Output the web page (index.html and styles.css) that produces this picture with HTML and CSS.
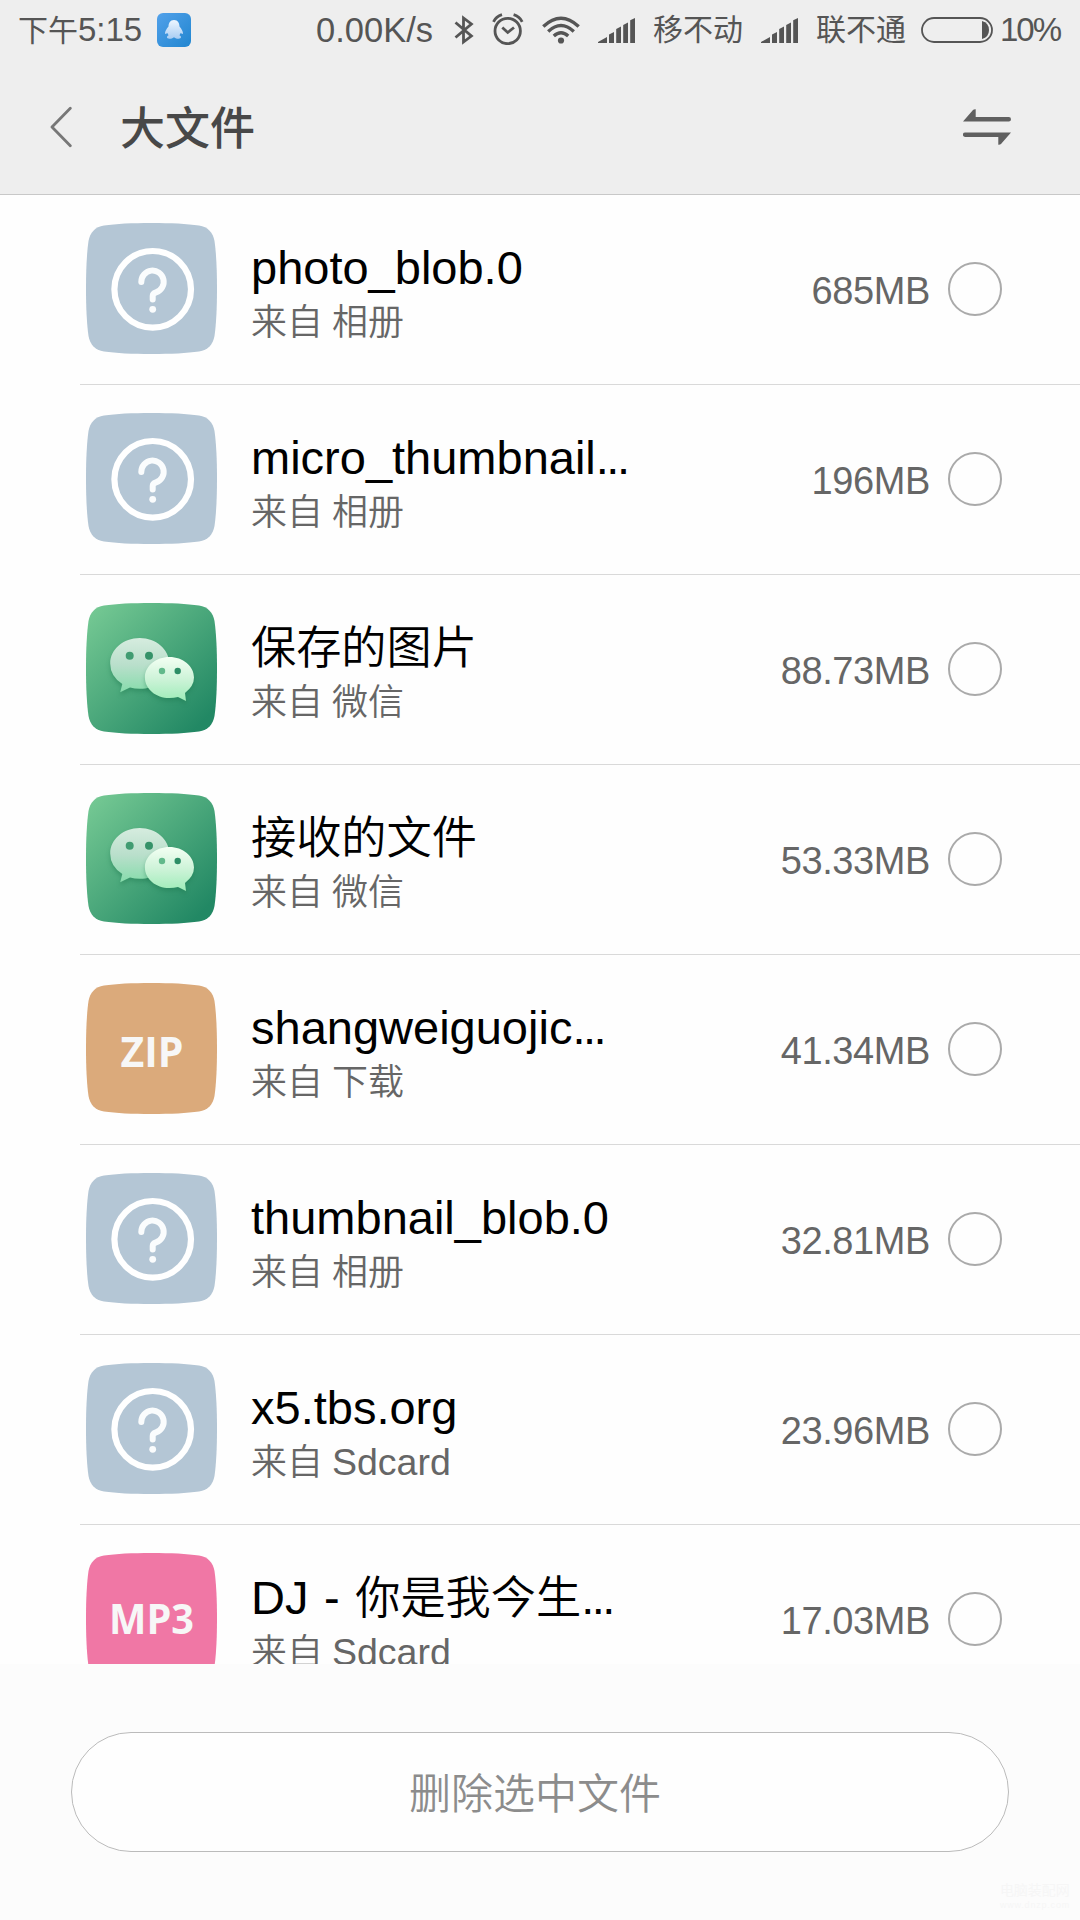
FILE: index.html
```html
<!DOCTYPE html>
<html lang="zh-CN">
<head>
    <meta charset="UTF-8">
    <meta name="viewport" content="width=device-width, initial-scale=1.0">
    <title>大文件</title>
    <link rel="stylesheet" href="styles.css">
</head>
<body>
    <!-- Shared icons -->
    <svg class="defs" width="0" height="0">
        <defs>
            <linearGradient id="green" x1="0" y1="0" x2="1" y2="1">
                <stop offset="0.05" stop-color="#74c893"/>
                <stop offset="0.9" stop-color="#228864"/>
            </linearGradient>
            <linearGradient id="bubble-back" x1="0" y1="0" x2="0" y2="1">
                <stop offset="0" stop-color="#d6ecdf"/>
                <stop offset="0.5" stop-color="#b9dfcb"/>
                <stop offset="1" stop-color="#86dcab"/>
            </linearGradient>
            <linearGradient id="bubble-front" x1="0" y1="0" x2="0" y2="1">
                <stop offset="0" stop-color="#f3fff3"/>
                <stop offset="0.5" stop-color="#cdf3d8"/>
                <stop offset="1" stop-color="#9eecb8"/>
            </linearGradient>
            <linearGradient id="blue" x1="0" y1="0" x2="1" y2="1">
                <stop offset="0" stop-color="#52a1ea"/>
                <stop offset="1" stop-color="#2186d0"/>
            </linearGradient>
            <linearGradient id="penguin" x1="0" y1="0" x2="0" y2="1">
                <stop offset="0" stop-color="#edf6ff"/>
                <stop offset="1" stop-color="#a9cdf3"/>
            </linearGradient>
        </defs>
        <symbol id="tile" viewBox="0 0 131 131">
            <path d="M65.5 0C85 0 101 .8 113 2.500C122 4 127 9.500 128.500 18C130.200 30 131 46 131 65.500C131 85 130.200 101 128.500 113C127 121.500 122 127 113 128.500C101 130.200 85 131 65.500 131C46 131 30 130.200 18 128.500C9 127 4 121.500 2.500 113C.8 101 0 85 0 65.500C0 46 .8 30 2.500 18C4 9.500 9 4 18 2.500C30 .8 46 0 65.500 0Z"/>
        </symbol>
        <symbol id="unknown" viewBox="0 0 131 131">
            <use href="#tile" fill="#b4c6d5"/>
            <circle cx="66.7" cy="66.3" r="38.300" fill="none" stroke="#fff" stroke-width="6.200"/>
            <path d="M55.300 59A11.200 11.200 0 1 1 70 69.400Q66.700 70.500 66.700 73V76.500" fill="none" stroke="#fafcfd" stroke-width="6" stroke-linecap="round" stroke-linejoin="round"/>
            <circle cx="66.7" cy="86.300" r="3.400" fill="#fafcfd"/>
        </symbol>
        <symbol id="wechat" viewBox="0 0 131 131">
            <use href="#tile" fill="url(#green)"/>
            <g class="bubble">
                <path d="M53.700 35C70 35 83.200 46.300 83.200 60.400S70 85.800 53.700 85.800Q48.500 85.800 44 84.600L34.200 89.300L36.300 81Q24.200 73 24.200 60.400C24.200 46.300 37.400 35 53.700 35Z" fill="url(#bubble-back)"/>
            </g>
            <circle cx="43.700" cy="52.700" r="4" fill="#419c72"/>
            <circle cx="63" cy="52.700" r="4" fill="#359269"/>
            <g class="bubble">
                <path d="M83.400 54C97 54 108 63.100 108 74.500Q108 83 99 90L100 98L92 94Q88 95.100 83.400 95.100C69.800 95.100 58.900 85.900 58.900 74.500S69.800 54 83.400 54Z" fill="url(#bubble-front)"/>
            </g>
            <circle cx="76" cy="68" r="3.200" fill="#62b98b"/>
            <circle cx="91.700" cy="68" r="3.200" fill="#2d8d66"/>
        </symbol>
        <symbol id="signal" viewBox="0 0 37 25">
            <path d="M0 25V24L9 19V25ZM11 25V16.500L16 14V25ZM18.200 25V11L23 8.500V25ZM25.200 25V7L30 4.500V25ZM32.200 25V2.200L37 0V25Z" fill="#555"/>
        </symbol>
    </svg>

    <div class="screen">
        <div class="header">
            <div class="status">
                <span class="time"><span class="zh">下午</span>5:15</span>
                <svg class="qq" viewBox="0 0 34 34">
                    <rect width="34" height="34" rx="6" fill="url(#blue)"/>
                    <path d="M17 7C13 7 11.700 10 11.500 13.500C9.500 16 7.800 18.500 8 20.500C8.500 21.300 9.500 20.700 10.300 20L11.600 22.300C9.200 23.500 9.500 25.700 12.300 25.700C15 25.700 16 25 17 24.200C18 25 19 25.700 21.700 25.700C24.500 25.700 24.800 23.500 22.400 22.300L23.700 20C24.500 20.700 25.500 21.300 26 20.500C26.200 18.500 24.500 16 22.500 13.500C22.300 10 21 7 17 7Z" fill="url(#penguin)"/>
                </svg>
                <span class="speed">0.00K/s</span>
                <svg class="bluetooth" viewBox="0 0 20 30"><path d="M1.500 7.500L17.400 21L9.500 27V3L17.400 9L1.500 22.500" fill="none" stroke="#555" stroke-width="2.800"/></svg>
                <svg class="alarm" viewBox="0 0 32 32">
                    <circle cx="15.700" cy="18" r="12.700" fill="none" stroke="#555" stroke-width="2.800"/>
                    <path d="M10.300 14.500L15.700 19.500L22 14.500M1.500 8.800Q4 3.500 10 1.700M30.200 8.800Q27.600 3.500 21.600 1.700" fill="none" stroke="#555" stroke-width="2.800"/>
                </svg>
                <svg class="wifi" viewBox="0 0 38 28">
                    <path d="M1.300 10.500Q19 -6 36.700 10.500M6.200 15.500Q19 3.500 31.800 15.500M11.800 20Q19 13.500 26.200 20" fill="none" stroke="#555" stroke-width="3.400"/>
                    <circle cx="19" cy="24.500" r="3.100" fill="#555"/>
                </svg>
                <svg class="signal"><use href="#signal"/></svg>
                <span class="carrier">移不动</span>
                <svg class="signal"><use href="#signal"/></svg>
                <span class="carrier">联不通</span>
                <svg class="battery" viewBox="0 0 72 26">
                    <rect x="1" y="1" width="70" height="24" rx="12" fill="none" stroke="#555" stroke-width="1.800"/>
                    <path d="M61 4Q68 6 68 13T61 22Z" fill="#555"/>
                </svg>
                <span class="percent">10%</span>
            </div>
            <div class="titlebar">
                <svg class="back" viewBox="0 0 22 42"><path d="M20.300 2.300L2 21L20.300 39.700" fill="none" stroke="#777" stroke-width="2.800" stroke-linecap="round" stroke-linejoin="round"/></svg>
                <h1>大文件</h1>
                <svg class="sort" viewBox="0 0 48 36">
                    <path d="M0 12.400L10 1Q11 0 12.700 .2V8H45.800A2.200 2.200 0 0 1 45.800 12.400ZM48 23.400L38 35Q37 36 35.300 35.800V28H2.200A2.200 2.200 0 0 1 2.200 23.400Z" fill="#606060"/>
                </svg>
            </div>
        </div>

        <div class="list">
            <div class="item">
                <svg class="icon"><use href="#unknown"/></svg>
                <div class="info">
                    <h2>photo_blob.0</h2>
                    <p><span>来自</span> <span>相册</span></p>
                </div>
                <span class="size">685MB</span>
                <span class="check"></span>
            </div>
            <div class="item">
                <svg class="icon"><use href="#unknown"/></svg>
                <div class="info">
                    <h2>micro_thumbnail<span class="dots">...</span></h2>
                    <p><span>来自</span> <span>相册</span></p>
                </div>
                <span class="size">196MB</span>
                <span class="check"></span>
            </div>
            <div class="item">
                <svg class="icon"><use href="#wechat"/></svg>
                <div class="info">
                    <h2><span class="zh">保存的图片</span></h2>
                    <p><span>来自</span> <span>微信</span></p>
                </div>
                <span class="size">88.73MB</span>
                <span class="check"></span>
            </div>
            <div class="item">
                <svg class="icon"><use href="#wechat"/></svg>
                <div class="info">
                    <h2><span class="zh">接收的文件</span></h2>
                    <p><span>来自</span> <span>微信</span></p>
                </div>
                <span class="size">53.33MB</span>
                <span class="check"></span>
            </div>
            <div class="item">
                <svg class="icon" viewBox="0 0 131 131">
                    <use href="#tile" fill="#dbaa7b"/>
                    <text x="66" y="83.500" class="ext" textLength="63" lengthAdjust="spacingAndGlyphs">ZIP</text>
                </svg>
                <div class="info">
                    <h2>shangweiguojic<span class="dots">...</span></h2>
                    <p><span>来自</span> <span>下载</span></p>
                </div>
                <span class="size">41.34MB</span>
                <span class="check"></span>
            </div>
            <div class="item">
                <svg class="icon"><use href="#unknown"/></svg>
                <div class="info">
                    <h2>thumbnail_blob.0</h2>
                    <p><span>来自</span> <span>相册</span></p>
                </div>
                <span class="size">32.81MB</span>
                <span class="check"></span>
            </div>
            <div class="item">
                <svg class="icon"><use href="#unknown"/></svg>
                <div class="info">
                    <h2>x5.tbs.org</h2>
                    <p><span>来自</span> Sdcard</p>
                </div>
                <span class="size">23.96MB</span>
                <span class="check"></span>
            </div>
            <div class="item">
                <svg class="icon" viewBox="0 0 131 131">
                    <use href="#tile" fill="#f077a5"/>
                    <text x="65.500" y="80.500" class="ext" textLength="85" lengthAdjust="spacingAndGlyphs">MP3</text>
                </svg>
                <div class="info">
                    <h2>DJ - <span class="zh">你是我今生</span><span class="dots">...</span></h2>
                    <p><span>来自</span> Sdcard</p>
                </div>
                <span class="size">17.03MB</span>
                <span class="check"></span>
            </div>
        </div>

        <div class="footer">
            <button type="button">删除选中文件</button>
            <div class="watermark">电脑装配网<small>www.dnzp.com</small></div>
        </div>
    </div>
</body>
</html>
```
FILE: styles.css
```css
* {
    box-sizing: border-box;
}
body {
    margin: 0;
    background-color: #fefefe;
    font-family: "Liberation Sans", "Noto Sans CJK SC", sans-serif;
}
.defs {
    position: absolute;
}
.screen {
    width: 1080px;
    height: 1920px;
    display: flex;
    flex-direction: column;
    overflow: hidden;
}
.header {
    height: 195px;
    flex: none;
    background-color: #eee;
    border-bottom: 1px solid #c8c8c8;
}

/* Status bar */
.status {
    height: 60px;
    display: flex;
    align-items: center;
    padding-left: 18px;
    color: #555;
    font-size: 33px;
    line-height: 62px;
    white-space: nowrap;
}
.status > * {
    flex: none;
}
.time {
    width: 139px;
}
.time .zh,
.carrier {
    font-size: 30px;
}
.qq {
    width: 34px;
    height: 34px;
}
.speed {
    width: 138px;
    margin-left: 125px;
    font-size: 34.5px;
}
.bluetooth {
    width: 20px;
    height: 30px;
}
.alarm {
    width: 32px;
    height: 32px;
    margin: 0 0 2px 18px;
}
.wifi {
    width: 38px;
    height: 28px;
    margin-left: 18px;
}
.signal {
    width: 37px;
    height: 25px;
    margin: 1px 0 0 18px;
}
.carrier {
    width: 90px;
    margin-left: 18px;
}
.carrier + .signal {
    margin-left: 18px;
}
.battery {
    width: 72px;
    height: 26px;
    margin-left: 15px;
}
.percent {
    margin-left: 7px;
    font-size: 33px;
    letter-spacing: -2px;
}

/* Title bar */
.titlebar {
    height: 134px;
    display: flex;
    align-items: center;
    padding: 0 69px 0 50px;
}
.back {
    width: 22px;
    height: 42px;
}
.titlebar h1 {
    flex: 1;
    margin: 5px 0 0 48px;
    color: #484848;
    font-size: 45px;
    font-weight: 500;
    line-height: 60px;
}
.sort {
    width: 48px;
    height: 36px;
}

/* File list */
.list {
    flex: 1;
    overflow: hidden;
}
.item {
    height: 190px;
    margin-left: 80px;
    padding: 0 78px 3px 6px;
    display: flex;
    align-items: center;
    border-bottom: 1px solid #d9d9d9;
}
.icon {
    width: 131px;
    height: 131px;
    flex: none;
}
.bubble {
    filter: drop-shadow(0 3px 2px rgba(20, 110, 70, 0.35));
}
.ext {
    fill: #f7f7f7;
    font-family: "Open Sans", sans-serif;
    font-size: 40.5px;
    font-weight: 700;
    text-anchor: middle;
}
.info {
    flex: 1;
    margin: 8px 0 0 34px;
    white-space: nowrap;
}
.info h2 {
    margin: 0;
    color: #000;
    font-size: 47px;
    font-weight: 350;
    line-height: 56px;
    height: 59px;
    word-spacing: 2.5px;
}
.info .zh {
    font-size: 45.2px;
}
.dots {
    letter-spacing: -2.5px;
}
.info p {
    margin: 0;
    height: 46px;
    color: #666;
    font-size: 37.5px;
    font-weight: 350;
    line-height: 46px;
    word-spacing: -1.5px;
}
.info p span {
    font-size: 36px;
}
.size {
    color: #666;
    font-size: 38px;
    line-height: 50px;
    margin-top: 6px;
    letter-spacing: -0.4px;
}
.check {
    width: 54px;
    height: 54px;
    margin: 1px 0 0 18px;
    border: 2px solid #aaa;
    border-radius: 50%;
}

/* Bottom button */
.footer {
    position: relative;
    height: 256px;
    flex: none;
    padding: 68px 71px 0;
    background-color: #fcfcfc;
}
.footer button {
    width: 100%;
    height: 120px;
    border: 1px solid #bbb;
    border-radius: 60px;
    background-color: #fefefe;
    color: #8c8c8c;
    font-family: inherit;
    font-size: 42px;
    font-weight: 350;
    padding: 0 10px 4px 0;
}
.watermark {
    position: absolute;
    right: 10px;
    bottom: 7px;
    color: #f6f6f6;
    font-size: 14px;
    line-height: 15px;
}
.watermark small {
    display: block;
    font-size: 9px;
    letter-spacing: 0.8px;
}
```
